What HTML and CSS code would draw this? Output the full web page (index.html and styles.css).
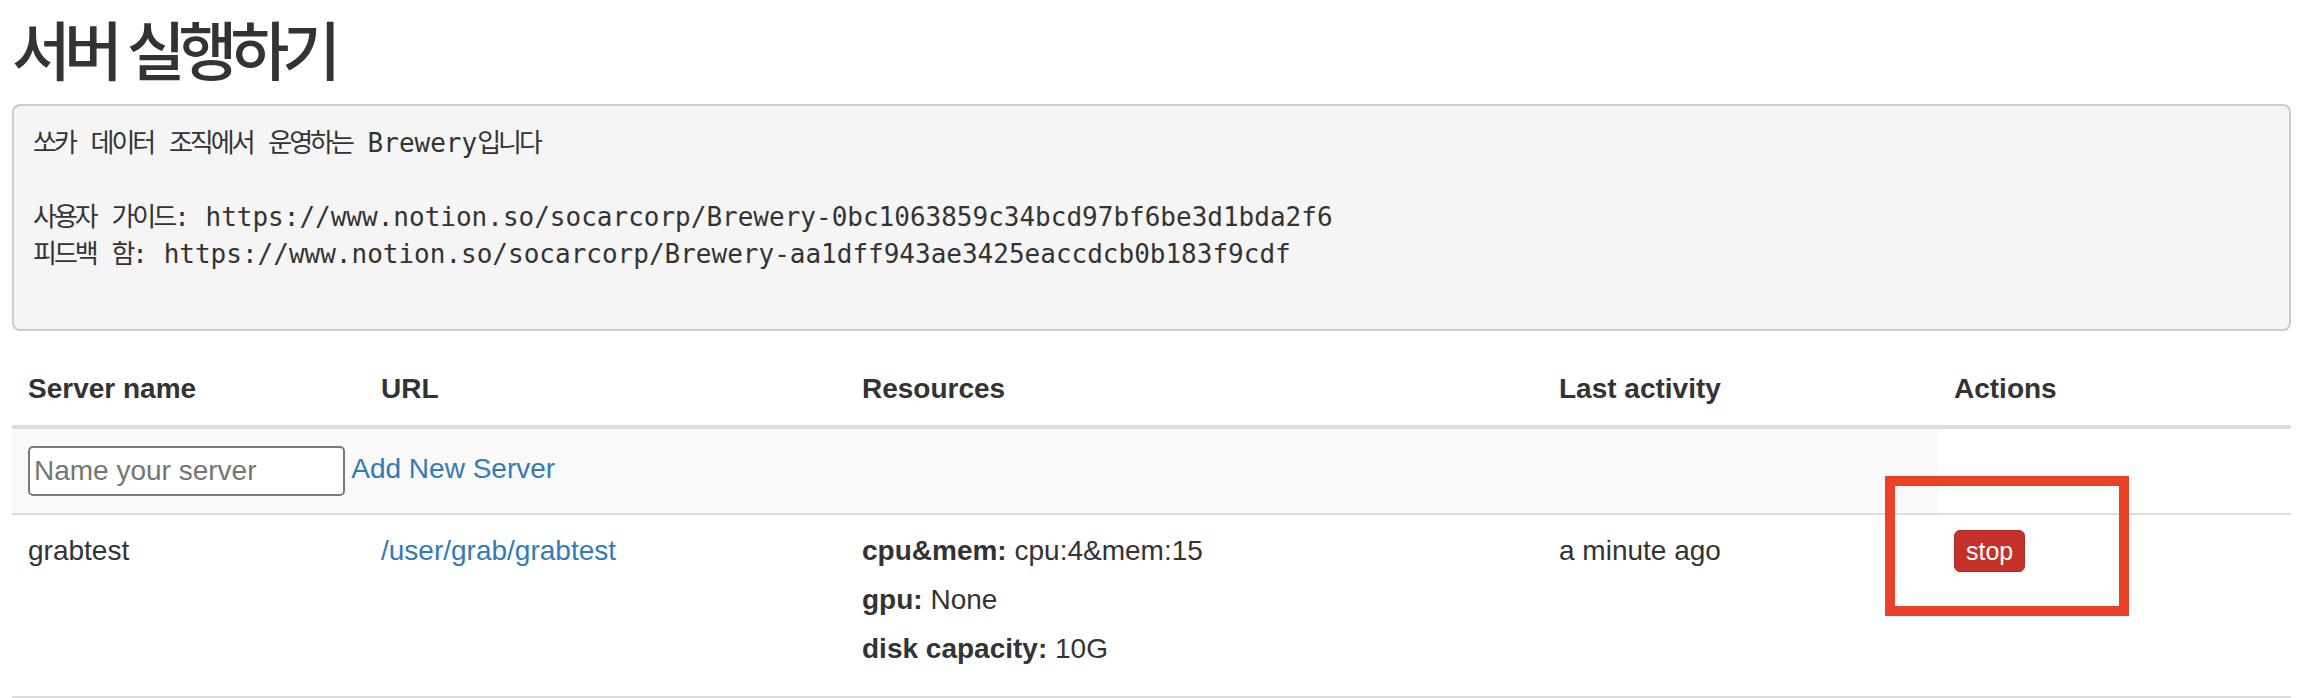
FILE: index.html
```html
<!DOCTYPE html>
<html lang="ko">
<head>
<meta charset="utf-8">
<title>서버 실행하기</title>
<link rel="stylesheet" href="styles.css">
</head>
<body>
<div class="container">
  <h1 class="title">서버 실행하기</h1>
  <pre class="notice"><span class="ko">쏘카</span> <span class="ko">데이터</span> <span class="ko">조직에서</span> <span class="ko">운영하는</span> Brewery<span class="ko">입니다</span>

<span class="ko">사용자</span> <span class="ko">가이드</span>: https://www.notion.so/socarcorp/Brewery-0bc1063859c34bcd97bf6be3d1bda2f6
<span class="ko">피드백</span> <span class="ko">함</span>: https://www.notion.so/socarcorp/Brewery-aa1dff943ae3425eaccdcb0b183f9cdf

</pre>
  <table class="servers">
    <colgroup>
      <col class="c1"><col class="c2"><col class="c3"><col class="c4"><col class="c5">
    </colgroup>
    <thead>
      <tr><th>Server name</th><th>URL</th><th>Resources</th><th>Last activity</th><th>Actions</th></tr>
    </thead>
    <tbody>
      <tr class="new-row">
        <td colspan="4"><input class="name-input" type="text" placeholder="Name your server"> <a class="link" href="#">Add New Server</a></td>
      </tr>
      <tr>
        <td>grabtest</td>
        <td><a class="link" href="#">/user/grab/grabtest</a></td>
        <td>
          <div class="res"><b>cpu&amp;mem:</b> cpu:4&amp;mem:15</div>
          <div class="res"><b>gpu:</b> None</div>
          <div class="res"><b>disk capacity:</b> 10G</div>
        </td>
        <td>a minute ago</td>
        <td><button class="btn-stop" type="button">stop</button></td>
      </tr>
    </tbody>
  </table>
</div>
<div class="annotation"></div>
</body>
</html>
```

FILE: styles.css
```css
* { box-sizing: border-box; }
html, body { margin: 0; background: #fff; }
body {
  font-family: "Liberation Sans", Arial, "Noto Sans CJK KR", sans-serif;
  font-size: 28px;
  line-height: 40px;
  color: #333;
}
.container { padding: 0 13px 0 12px; }
.title {
  font-family: "Noto Sans CJK KR", sans-serif;
  font-weight: 500;
  font-size: 64px;
  line-height: 66px;
  letter-spacing: -7px;
  margin: 14px 0 24px;
  color: #333;
}
.notice {
  margin: 0 0 22px;
  padding: 19px;
  border: 2px solid #ccc;
  border-radius: 8px;
  background: #f5f5f5;
  font-family: "DejaVu Sans Mono", "Noto Sans CJK KR", monospace;
  font-size: 26px;
  line-height: 37px;
  color: #333;
  white-space: pre-wrap;
}
.ko {
  font-family: "Noto Sans CJK KR", sans-serif;
  letter-spacing: -3px;
  line-height: 26px;
}
.servers {
  width: 100%;
  border-collapse: collapse;
  table-layout: fixed;
}
.c1 { width: 353px; }
.c2 { width: 481px; }
.c3 { width: 697px; }
.c4 { width: 395px; }
.servers th, .servers td {
  padding: 16px;
  text-align: left;
  vertical-align: top;
  line-height: 40px;
}
.servers th { font-weight: bold; border-bottom: 4px solid #ddd; }
.servers td { border-top: 2px solid #ddd; }
.servers tbody tr:last-child td { border-bottom: 2px solid #ddd; }
.new-row td { background: #f9f9f9; white-space: nowrap; }
.name-input {
  width: 317px;
  height: 50px;
  margin: 1px 0;
  padding: 0 4px;
  border: 2px solid #7a7a7a;
  border-radius: 5px;
  font-family: "Liberation Sans", Arial, sans-serif;
  font-size: 28px;
  color: #333;
  vertical-align: middle;
  background: #fff;
}
.name-input::placeholder { color: #757575; }
.link { color: #337ab7; text-decoration: none; }
.res { margin-bottom: 9px; }
.res:last-child { margin-bottom: 11px; }
.res b { color: #333; }
.btn-stop {
  display: inline-block;
  vertical-align: top;
  margin-top: -1px;
  padding: 3px 11px;
  border: 1px solid #b02a25;
  border-radius: 6px;
  background: #c4312b;
  color: #fff;
  font-family: "Liberation Sans", Arial, sans-serif;
  font-size: 25px;
  line-height: 34px;
}
.annotation {
  position: absolute;
  left: 1885px;
  top: 476px;
  width: 244px;
  height: 140px;
  border: 10px solid #ea4129;
}
```
